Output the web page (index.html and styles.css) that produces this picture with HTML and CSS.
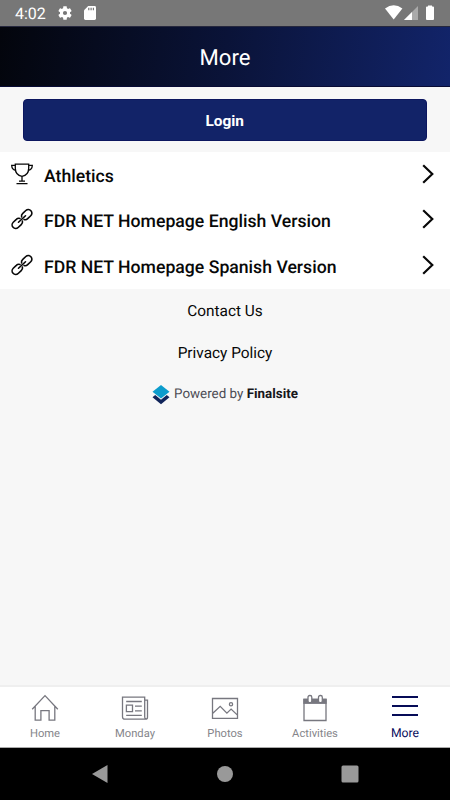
FILE: index.html
```html
<!DOCTYPE html>
<html lang="en">
<head>
<meta charset="utf-8">
<title>More</title>
<link rel="stylesheet" href="styles.css">
</head>
<body>
<svg class="defs" aria-hidden="true">
  <symbol id="link" viewBox="0 0 22 22">
    <g fill="none" stroke="currentColor" stroke-width="1.6" stroke-linecap="round" transform="rotate(-43 11 11)">
      <path d="M9.900 9.200a3.600 3.600 0 0 0-3.300-1.800H2.400a3.600 3.600 0 0 0 0 7.200h4.200a3.600 3.600 0 0 0 3.300-1.800"/>
      <path d="M12.100 9.200a3.600 3.600 0 0 1 3.300-1.800h4.200a3.600 3.600 0 0 1 0 7.200h-4.200a3.600 3.600 0 0 1-3.300-1.800"/>
      <path d="M6.200 11h9.600"/>
    </g>
  </symbol>
  <symbol id="chevron" viewBox="0 0 12 20">
    <path d="M1.200 1.200L10.300 10l-9.100 8.800" fill="none" stroke="currentColor" stroke-width="2.200"/>
  </symbol>
</svg>
<div class="status">
  <span class="clock">4:02</span>
  <svg class="gear" viewBox="2 2 20 20"><path fill="#fff" d="M19.140 12.940c.04-.3.060-.61.060-.94s-.02-.64-.07-.94l2.030-1.580c.18-.14.230-.41.120-.61l-1.920-3.320c-.12-.22-.37-.29-.59-.22l-2.390.96c-.5-.38-1.030-.7-1.620-.94l-.36-2.540c-.04-.24-.24-.41-.48-.41h-3.840c-.24 0-.43.17-.47.41l-.36 2.540c-.59.24-1.130.57-1.620.94l-2.390-.96c-.22-.08-.47 0-.59.22L2.740 8.870c-.12.21-.08.470.12.610l2.030 1.580c-.05.300-.09.630-.09.940s.02.640.07.940l-2.030 1.580c-.18.140-.23.410-.12.610l1.920 3.320c.12.220.370.290.59.220l2.390-.96c.5.380 1.030.700 1.620.940l.36 2.540c.05.240.24.410.48.410h3.840c.24 0 .44-.17.470-.41l.36-2.540c.59-.24 1.130-.56 1.620-.94l2.390.96c.22.080.47 0 .59-.22l1.920-3.320c.12-.22.070-.47-.12-.61l-2.010-1.580zM12 15a3 3 0 1 1 0-6 3 3 0 0 1 0 6z"/></svg>
  <svg class="card" viewBox="0 0 12 14"><path fill="#fff" d="M4.200 0H10.600Q12 0 12 1.400V12.600Q12 14 10.600 14H1.400Q0 14 0 12.600V4.200z"/><path d="M4.800 1.800v2.500M7.100 1.800v2.500M9.400 1.800v2.500" stroke="#777" stroke-width="1.200"/></svg>
  <svg class="signals" viewBox="0 0 52 16">
    <path fill="#fff" d="M0 3.500Q8.700-3 17.400 3.500L8.700 14.500z"/>
    <path fill="#aaa" d="M33 1v14H19z"/><path fill="#fff" d="M27 7v8H19z"/>
    <path fill="#fff" d="M43 1.500V.5h4v1h1q1 0 1 1V14q0 1-1 1h-6q-1 0-1-1V2.500q0-1 1-1z"/>
  </svg>
</div>
<header class="header"><h1>More</h1></header>
<main class="content">
  <div class="login-wrap"><button class="login">Login</button></div>
  <nav class="list">
    <a class="row"><svg class="row-icon" viewBox="0 0 22 22"><g fill="none" stroke="currentColor" stroke-width="1.300"><path d="M4.300 1.100h13.400v4.200c0 4.200-2.700 7.300-6.700 8.100-4-.8-6.700-3.900-6.700-8.100z"/><path d="M4.300 2.400H.7c.1 2.700 1.800 4.500 4.400 4.900M17.700 2.400h3.600c-.1 2.700-1.800 4.500-4.400 4.900"/><path d="M11 13.400v5M8 18.200h6M5.500 20.600h11"/></g></svg><span>Athletics</span><svg class="chev"><use href="#chevron"/></svg></a>
    <a class="row"><svg class="row-icon"><use href="#link"/></svg><span>FDR NET Homepage English Version</span><svg class="chev"><use href="#chevron"/></svg></a>
    <a class="row"><svg class="row-icon"><use href="#link"/></svg><span>FDR NET Homepage Spanish Version</span><svg class="chev"><use href="#chevron"/></svg></a>
  </nav>
  <div class="links"><a>Contact Us</a><a>Privacy Policy</a></div>
  <div class="powered">
    <svg class="logo" viewBox="0 0 18 20"><path fill="#0c9ccc" d="M9 0l8.500 6.800L9 13.600.5 6.800z"/><path fill="#10245a" d="M3.200 10.100L9 14.700l5.800-4.600 2.700 2.200L9 19.300.5 12.300z"/></svg>
    <span>Powered by <b>Finalsite</b></span>
  </div>
</main>
<nav class="tabs">
  <a class="tab"><svg viewBox="0 0 28 28"><path d="M1.200 15.200L14 1.600l12.800 13.600M4.200 12.500v13.700h5.700v-9.500h8.200v9.500h5.700V12.500"/></svg><span>Home</span></a>
  <a class="tab"><svg viewBox="0 0 28 28"><path d="M23.700 23.200V3.200H1.500v19.500q0 2.500 2.500 2.500h20.500q2 0 2-2V6.200h-2.800M23.700 23q0 1.800 1.400 2M5.200 7.500h15.600M5.200 21.300h15.600M14 12.200h6.800M14 16.800h6.800M5.400 11.200h6.100v6.400H5.400z"/></svg><span>Monday</span></a>
  <a class="tab"><svg viewBox="0 0 28 28"><path d="M1.500 4.500h25v19.800h-25zM1.800 19.200l7.400-6.900 6.700 6.800 4.200-4 6.100 5.800"/><circle cx="20" cy="10.300" r="1.600"/></svg><span>Photos</span></a>
  <a class="tab"><svg viewBox="0 0 28 28"><path fill="#77777f" stroke="none" d="M2.300 4.700h23.400v5.200H2.300z"/><path d="M3 5.500h22v21H3z"/><rect class="ring" x="7" y="1.500" width="3.800" height="7.200" rx="1.700"/><rect class="ring" x="17.500" y="1.500" width="3.800" height="7.200" rx="1.700"/></svg><span>Activities</span></a>
  <a class="tab active"><svg viewBox="0 0 28 28"><path d="M1 3h26M1 12h26M1 21h26"/></svg><span>More</span></a>
</nav>
<footer class="system">
  <svg viewBox="0 0 18 18"><path d="M0 9L15.500 0v18z"/></svg>
  <svg viewBox="0 0 18 18"><circle cx="9" cy="9" r="8"/></svg>
  <svg viewBox="0 0 18 18"><rect x=".5" y=".5" width="17" height="17" rx="1.500"/></svg>
</footer>
</body>
</html>
```
FILE: styles.css
```css
* { box-sizing: border-box; }
body {
  margin: 0;
  height: 800px;
  display: flex;
  flex-direction: column;
  background: #f7f7f7;
  color: #080808;
  font-family: Roboto, "Liberation Sans", sans-serif;
  text-rendering: geometricPrecision;
  overflow: hidden;
}
svg { display: block; flex: none; }
.defs { display: none; }
.status {
  height: 26px;
  flex: none;
  display: flex;
  align-items: center;
  padding: 0 13px 0 15px;
  background: #777;
  color: #fff;
}
.clock { width: 43px; font-size: 16px; line-height: 26px; padding-top: 1px; }
.gear { width: 14px; height: 14px; }
.card { width: 12px; height: 14px; margin-left: 12px; }
.signals { width: 52px; height: 16px; margin-left: auto; }
.header {
  height: 61px;
  flex: none;
  display: flex;
  justify-content: center;
  align-items: center;
  background: linear-gradient(98deg, #03050c 0%, #0a1338 50%, #12246a 100%);
  border-top: 1px solid #25273d;
  border-bottom: 1px solid #080b35;
  color: #fff;
}
h1 { margin: 3px 0 0; font-size: 22.1px; font-weight: 400; }
.content { flex: 1; }
.login-wrap { height: 65px; padding: 12px 23px 0 22.5px; }
.login {
  display: block;
  width: 100%;
  height: 42px;
  padding: 1px 0 0;
  border: 1px solid #0c165f;
  border-radius: 4px;
  background: #122368;
  color: #fff;
  font: 700 15.4px Roboto, sans-serif;
}
.list { display: grid; grid-template-rows: repeat(3, 1fr); height: 137px; background: #fff; }
.row {
  display: flex;
  align-items: center;
  padding: 0 16px 0 11px;
  font-size: 17.65px;
  font-weight: 500;
}
.row span { margin: 4px auto 0 11px; }
.row-icon { width: 22px; height: 22px; margin-bottom: 2px; overflow: visible; }
.chev { width: 12px; height: 20px; margin-bottom: 2px; }
.links {
  display: flex;
  flex-direction: column;
  align-items: center;
  font-size: 15.4px;
  line-height: 42px;
  padding-top: 1px;
}
.powered {
  display: flex;
  justify-content: center;
  align-items: center;
  gap: 4px;
  height: 41px;
  color: #4c4c55;
  font-size: 13.4px;
}
.powered b { color: #17171c; }
.logo { width: 18px; height: 20px; }
.tabs {
  height: 63px;
  flex: none;
  display: grid;
  grid-template-columns: repeat(5, 1fr);
  background: #fff;
  border-top: 2px solid #efefef;
  border-bottom: 1px solid #aaa;
}
.tab {
  display: flex;
  flex-direction: column;
  align-items: center;
  padding-top: 7px;
  color: #85858a;
  font-size: 11.2px;
}
.tab svg { width: 28px; height: 28px; fill: none; stroke: #77777f; stroke-width: 1.3; }
.tab .ring { fill: #fff; }
.tab span { line-height: 14px; margin-top: 5px; }
.tab.active { color: #080c5c; font-size: 12.200px; }
.tab.active span { margin-top: 4px; }
.tab.active svg { stroke: #060b57; stroke-width: 2; }
.system {
  height: 52px;
  flex: none;
  display: flex;
  justify-content: center;
  align-items: center;
  gap: 106.5px;
  background: #000;
  fill: #999;
}
.system svg { width: 18px; height: 18px; }
```
